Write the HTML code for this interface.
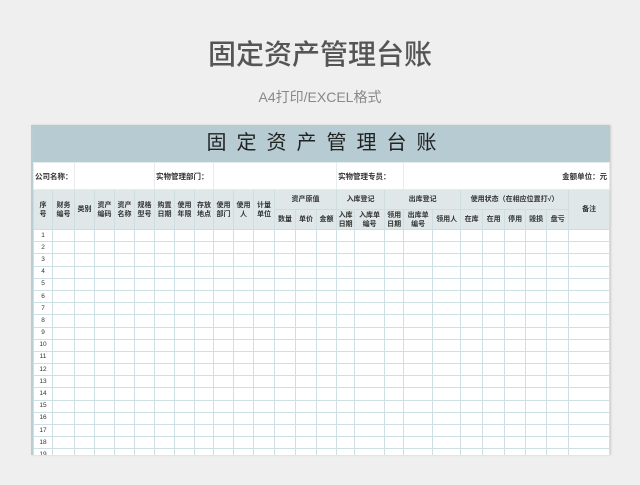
<!DOCTYPE html>
<html><head><meta charset="utf-8"><style>
*{margin:0;padding:0;box-sizing:border-box}
body{width:640px;height:485px;background:#efefef;font-family:"Liberation Sans","Noto Sans CJK SC",sans-serif;position:relative;overflow:hidden}
.h1{position:absolute;top:36px;left:0;width:640px;text-align:center;font-size:28px;color:#555;line-height:38px;font-weight:500}
.h2{position:absolute;top:88px;left:0;width:640px;text-align:center;font-size:14px;color:#888;line-height:18px}
.sheet{position:absolute;left:31px;top:125px;width:579px;height:330px;overflow:hidden;background:#fff;border-left:2px solid #b9cdd3;box-shadow:1px 0 2px #ccc}
.band{height:37px;background:#b7ccd2;text-align:center;font-size:20px;line-height:37px;color:#222;letter-spacing:10px;padding-left:10px}
table{border-collapse:collapse;table-layout:fixed;width:576px}
td{border:1px solid #cfdde0;font-size:7px;color:#333;text-align:center;padding:0;overflow:hidden;white-space:nowrap;line-height:9px}
.info td{height:27px;font-weight:bold;border-color:#e4ecee;text-align:left;padding-left:1px;font-size:7.5px}
.hd td{background:#dfe7e8;height:20px;font-weight:bold;white-space:normal}
.d td{height:12.2px;font-size:6.5px;line-height:10px;border-color:#cfe0e4}
</style></head><body>
<div class="h1">固定资产管理台账</div>
<div class="h2">A4打印/EXCEL格式</div>
<div class="sheet">
<div class="band">固定资产管理台账</div>
<table>
<colgroup><col style="width:19px"><col style="width:22px"><col style="width:20px"><col style="width:20px"><col style="width:20px"><col style="width:20px"><col style="width:20px"><col style="width:20px"><col style="width:19px"><col style="width:20px"><col style="width:20px"><col style="width:21px"><col style="width:21px"><col style="width:21px"><col style="width:20px"><col style="width:18px"><col style="width:30px"><col style="width:19px"><col style="width:29px"><col style="width:28px"><col style="width:22px"><col style="width:22px"><col style="width:21px"><col style="width:21px"><col style="width:22px"><col style="width:41px"></colgroup>
<tr class="info"><td colspan="2">公司名称：</td><td colspan="4"></td><td colspan="3">实物管理部门：</td><td colspan="6"></td><td colspan="3">实物管理专员：</td><td colspan="8" style="text-align:right;padding-right:2px">金额单位：元</td></tr>
<tr class="hd"><td rowspan="2">序<br>号</td><td rowspan="2">财务<br>编号</td><td rowspan="2">类别</td><td rowspan="2">资产<br>编码</td><td rowspan="2">资产<br>名称</td><td rowspan="2">规格<br>型号</td><td rowspan="2">购置<br>日期</td><td rowspan="2">使用<br>年限</td><td rowspan="2">存放<br>地点</td><td rowspan="2">使用<br>部门</td><td rowspan="2">使用<br>人</td><td rowspan="2">计量<br>单位</td><td colspan="3">资产原值</td><td colspan="2">入库登记</td><td colspan="3">出库登记</td><td colspan="5">使用状态（在相应位置打√）</td><td rowspan="2">备注</td></tr>
<tr class="hd"><td>数量</td><td>单价</td><td>金额</td><td>入库<br>日期</td><td>入库单<br>编号</td><td>领用<br>日期</td><td>出库单<br>编号</td><td>领用人</td><td>在库</td><td>在用</td><td>停用</td><td>毁损</td><td>盘亏</td></tr>
<tr class="d"><td>1</td><td></td><td></td><td></td><td></td><td></td><td></td><td></td><td></td><td></td><td></td><td></td><td></td><td></td><td></td><td></td><td></td><td></td><td></td><td></td><td></td><td></td><td></td><td></td><td></td><td></td></tr>
<tr class="d"><td>2</td><td></td><td></td><td></td><td></td><td></td><td></td><td></td><td></td><td></td><td></td><td></td><td></td><td></td><td></td><td></td><td></td><td></td><td></td><td></td><td></td><td></td><td></td><td></td><td></td><td></td></tr>
<tr class="d"><td>3</td><td></td><td></td><td></td><td></td><td></td><td></td><td></td><td></td><td></td><td></td><td></td><td></td><td></td><td></td><td></td><td></td><td></td><td></td><td></td><td></td><td></td><td></td><td></td><td></td><td></td></tr>
<tr class="d"><td>4</td><td></td><td></td><td></td><td></td><td></td><td></td><td></td><td></td><td></td><td></td><td></td><td></td><td></td><td></td><td></td><td></td><td></td><td></td><td></td><td></td><td></td><td></td><td></td><td></td><td></td></tr>
<tr class="d"><td>5</td><td></td><td></td><td></td><td></td><td></td><td></td><td></td><td></td><td></td><td></td><td></td><td></td><td></td><td></td><td></td><td></td><td></td><td></td><td></td><td></td><td></td><td></td><td></td><td></td><td></td></tr>
<tr class="d"><td>6</td><td></td><td></td><td></td><td></td><td></td><td></td><td></td><td></td><td></td><td></td><td></td><td></td><td></td><td></td><td></td><td></td><td></td><td></td><td></td><td></td><td></td><td></td><td></td><td></td><td></td></tr>
<tr class="d"><td>7</td><td></td><td></td><td></td><td></td><td></td><td></td><td></td><td></td><td></td><td></td><td></td><td></td><td></td><td></td><td></td><td></td><td></td><td></td><td></td><td></td><td></td><td></td><td></td><td></td><td></td></tr>
<tr class="d"><td>8</td><td></td><td></td><td></td><td></td><td></td><td></td><td></td><td></td><td></td><td></td><td></td><td></td><td></td><td></td><td></td><td></td><td></td><td></td><td></td><td></td><td></td><td></td><td></td><td></td><td></td></tr>
<tr class="d"><td>9</td><td></td><td></td><td></td><td></td><td></td><td></td><td></td><td></td><td></td><td></td><td></td><td></td><td></td><td></td><td></td><td></td><td></td><td></td><td></td><td></td><td></td><td></td><td></td><td></td><td></td></tr>
<tr class="d"><td>10</td><td></td><td></td><td></td><td></td><td></td><td></td><td></td><td></td><td></td><td></td><td></td><td></td><td></td><td></td><td></td><td></td><td></td><td></td><td></td><td></td><td></td><td></td><td></td><td></td><td></td></tr>
<tr class="d"><td>11</td><td></td><td></td><td></td><td></td><td></td><td></td><td></td><td></td><td></td><td></td><td></td><td></td><td></td><td></td><td></td><td></td><td></td><td></td><td></td><td></td><td></td><td></td><td></td><td></td><td></td></tr>
<tr class="d"><td>12</td><td></td><td></td><td></td><td></td><td></td><td></td><td></td><td></td><td></td><td></td><td></td><td></td><td></td><td></td><td></td><td></td><td></td><td></td><td></td><td></td><td></td><td></td><td></td><td></td><td></td></tr>
<tr class="d"><td>13</td><td></td><td></td><td></td><td></td><td></td><td></td><td></td><td></td><td></td><td></td><td></td><td></td><td></td><td></td><td></td><td></td><td></td><td></td><td></td><td></td><td></td><td></td><td></td><td></td><td></td></tr>
<tr class="d"><td>14</td><td></td><td></td><td></td><td></td><td></td><td></td><td></td><td></td><td></td><td></td><td></td><td></td><td></td><td></td><td></td><td></td><td></td><td></td><td></td><td></td><td></td><td></td><td></td><td></td><td></td></tr>
<tr class="d"><td>15</td><td></td><td></td><td></td><td></td><td></td><td></td><td></td><td></td><td></td><td></td><td></td><td></td><td></td><td></td><td></td><td></td><td></td><td></td><td></td><td></td><td></td><td></td><td></td><td></td><td></td></tr>
<tr class="d"><td>16</td><td></td><td></td><td></td><td></td><td></td><td></td><td></td><td></td><td></td><td></td><td></td><td></td><td></td><td></td><td></td><td></td><td></td><td></td><td></td><td></td><td></td><td></td><td></td><td></td><td></td></tr>
<tr class="d"><td>17</td><td></td><td></td><td></td><td></td><td></td><td></td><td></td><td></td><td></td><td></td><td></td><td></td><td></td><td></td><td></td><td></td><td></td><td></td><td></td><td></td><td></td><td></td><td></td><td></td><td></td></tr>
<tr class="d"><td>18</td><td></td><td></td><td></td><td></td><td></td><td></td><td></td><td></td><td></td><td></td><td></td><td></td><td></td><td></td><td></td><td></td><td></td><td></td><td></td><td></td><td></td><td></td><td></td><td></td><td></td></tr>
<tr class="d"><td>19</td><td></td><td></td><td></td><td></td><td></td><td></td><td></td><td></td><td></td><td></td><td></td><td></td><td></td><td></td><td></td><td></td><td></td><td></td><td></td><td></td><td></td><td></td><td></td><td></td><td></td></tr>
<tr class="d"><td>20</td><td></td><td></td><td></td><td></td><td></td><td></td><td></td><td></td><td></td><td></td><td></td><td></td><td></td><td></td><td></td><td></td><td></td><td></td><td></td><td></td><td></td><td></td><td></td><td></td><td></td></tr>
</table>
</div>
</body></html>
